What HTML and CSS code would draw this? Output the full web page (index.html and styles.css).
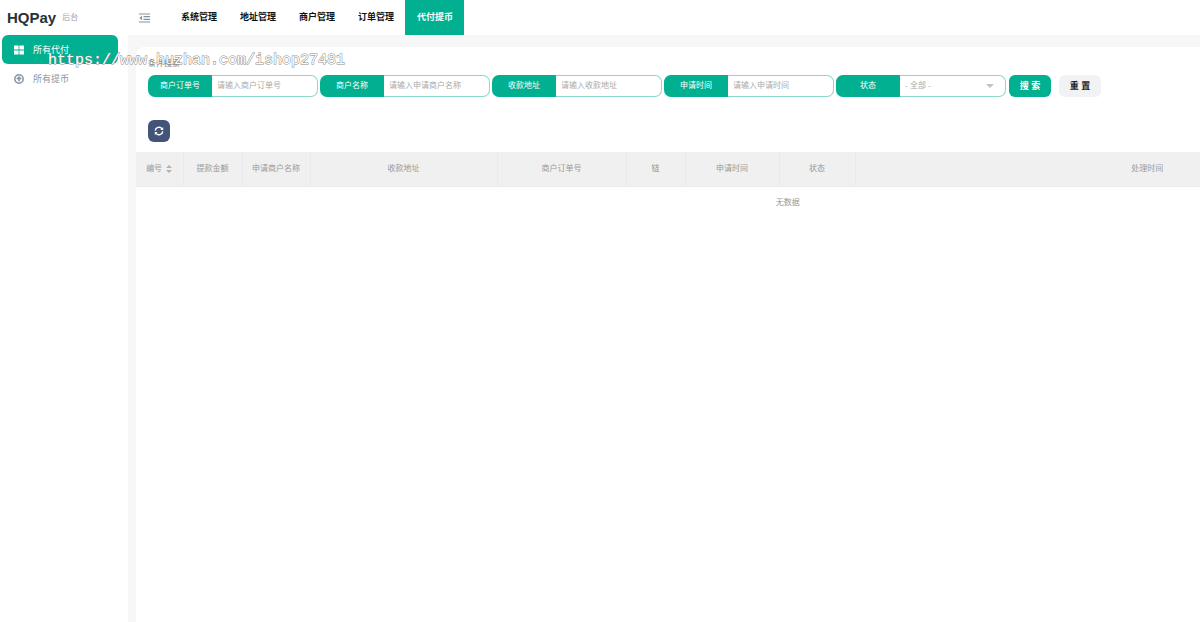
FILE: index.html
```html
<!DOCTYPE html>
<html lang="zh-CN">
<head>
    <meta charset="UTF-8">
    <meta name="viewport" content="width=device-width, initial-scale=1.0">
    <title>HQPay 后台</title>
    <link rel="stylesheet" href="styles.css">
</head>
<body>
    <!-- Top bar -->
    <header class="topbar">
        <a class="logo" href="#">HQPay <small>后台</small></a>
        <button class="menu-toggle" type="button" aria-label="收起菜单">
            <svg width="12" height="10" viewBox="0 0 12 10" fill="none" stroke="currentColor" stroke-width="1.2">
                <path d="M0 1h11M4.5 3.7H11M4.5 6.3H11M0 9h11"/>
                <path d="M3 2.8v4.4L.4 5z" fill="currentColor" stroke="none"/>
            </svg>
        </button>
        <nav class="top-nav">
            <a href="#">系统管理</a>
            <a href="#">地址管理</a>
            <a href="#">商户管理</a>
            <a href="#">订单管理</a>
            <a class="active" href="#">代付提币</a>
        </nav>
    </header>

    <div class="layout">
        <!-- Side menu -->
        <aside class="sidebar">
            <a class="active" href="#">
                <svg width="10" height="10" viewBox="0 0 10 10" fill="currentColor">
                    <path d="M0 .6h4.6v4H0zM5.4.6H10v4H5.4zM0 5.4h4.6v4H0zM5.4 5.4H10v4H5.4z"/>
                </svg>
                所有代付
            </a>
            <a href="#">
                <svg width="10" height="10" viewBox="0 0 10 10" fill="none" stroke="currentColor" stroke-width="1.5">
                    <circle cx="5" cy="5" r="4.2"/>
                    <path d="M5 7.4V3.2M2.8 5.2L5 3l2.2 2.2"/>
                </svg>
                所有提币
            </a>
        </aside>

        <main class="panel">
            <!-- Search form -->
            <form class="search">
                <h2 class="search-title">条件搜索</h2>
                <div class="search-row">
                    <div class="field">
                        <label for="orderNo">商户订单号</label>
                        <input type="text" id="orderNo" placeholder="请输入商户订单号">
                    </div>
                    <div class="field">
                        <label for="merchant">商户名称</label>
                        <input type="text" id="merchant" placeholder="请输入申请商户名称">
                    </div>
                    <div class="field">
                        <label for="address">收款地址</label>
                        <input type="text" id="address" placeholder="请输入收款地址">
                    </div>
                    <div class="field">
                        <label for="applyTime">申请时间</label>
                        <input type="text" id="applyTime" placeholder="请输入申请时间">
                    </div>
                    <div class="field">
                        <label for="status">状态</label>
                        <div class="select-box">
                            <select id="status">
                                <option>- 全部 -</option>
                            </select>
                            <svg width="8" height="4" viewBox="0 0 8 4" fill="#c2c2c2"><path d="M0 0h8L4 4z"/></svg>
                        </div>
                    </div>
                    <div class="actions">
                        <button class="btn btn-primary" type="submit">搜 索</button>
                        <button class="btn" type="reset">重 置</button>
                    </div>
                </div>
            </form>

            <!-- Toolbar -->
            <div class="toolbar">
                <button class="refresh" type="button" aria-label="刷新">
                    <svg width="10" height="10" viewBox="0 0 10 10" fill="none" stroke="currentColor" stroke-width="1.4">
                        <path d="M1.2 4.6A3.8 3.8 0 0 1 8 2.7M8.8 5.4A3.8 3.8 0 0 1 2 7.3"/>
                        <path d="M9.2 1v3H6.2zM.8 9V6h3z" fill="currentColor" stroke="none"/>
                    </svg>
                </button>
            </div>

            <!-- Data table -->
            <div class="table-wrap">
                <table class="data-table">
                    <colgroup>
                        <col class="col-id">
                        <col class="col-short">
                        <col class="col-name">
                        <col class="col-address">
                        <col class="col-order">
                        <col class="col-short">
                        <col class="col-time">
                        <col class="col-status">
                        <col>
                    </colgroup>
                    <thead>
                        <tr>
                            <th>
                                编号
                                <svg class="sort" width="6" height="8" viewBox="0 0 6 8" fill="#b2b2b2"><path d="M0 3L3 0l3 3zM0 5h6L3 8z"/></svg>
                            </th>
                            <th>提款金额</th>
                            <th>申请商户名称</th>
                            <th>收款地址</th>
                            <th>商户订单号</th>
                            <th>链</th>
                            <th>申请时间</th>
                            <th>状态</th>
                            <th>处理时间</th>
                        </tr>
                    </thead>
                    <tbody>
                        <tr>
                            <td colspan="9">无数据</td>
                        </tr>
                    </tbody>
                </table>
            </div>
        </main>
    </div>

    <div class="watermark">https://www.huzhan.com/ishop27481</div>
</body>
</html>
```
FILE: styles.css
```css
/* Global styles */
* {
    box-sizing: border-box;
}

body {
    margin: 0;
    min-height: 100vh;
    display: flex;
    flex-direction: column;
    background-color: #f7f7f7;
    color: #999;
    font-family: "Liberation Sans", "Noto Sans CJK SC", sans-serif;
    font-size: 8px;
    line-height: 12px;
}

a {
    color: inherit;
    text-decoration: none;
}

button,
input,
select {
    font: inherit;
    color: inherit;
    border: none;
    margin: 0;
    padding: 0;
    background: none;
}

button {
    cursor: pointer;
}

svg {
    display: block;
    flex: none;
}

/* Top bar */
.topbar {
    display: flex;
    align-items: center;
    height: 35px;
    background-color: #fff;
}

.logo {
    display: flex;
    align-items: center;
    gap: 6px;
    width: 128px;
    padding-left: 7px;
    color: #263238;
    font-size: 15px;
    font-weight: bold;
}

.logo small {
    color: #99a1ad;
    font-size: 8px;
    font-weight: normal;
}

.menu-toggle {
    padding: 0 11px;
    color: #8392a5;
}

.top-nav {
    display: flex;
    margin-left: 7px;
    color: #111;
    font-size: 9px;
    font-weight: bold;
    line-height: 35px;
}

.top-nav a {
    padding: 0 11px 0 12px;
}

.top-nav .active {
    background-color: #00b090;
    color: #fff;
}

/* Side menu */
.layout {
    display: flex;
    flex: 1;
}

.sidebar {
    flex: none;
    width: 128px;
    padding: 0 10px 0 2px;
    background-color: #fff;
    color: #8795a4;
    font-size: 9px;
}

.sidebar a {
    display: flex;
    align-items: center;
    gap: 9px;
    height: 29px;
    padding-left: 12px;
    border-radius: 6px;
}

.sidebar .active {
    background-color: #00b090;
    color: #fff;
}

/* Content panel */
.panel {
    flex: 1;
    min-width: 0;
    margin: 12px 0 0 8px;
    background-color: #fff;
    border-radius: 8px 0 0 0;
}

.search {
    padding: 11px 12px 0;
}

.search-title {
    margin: 0 0 5px;
    color: #777;
    font-size: 8px;
    font-weight: normal;
}

.search-row {
    display: flex;
    gap: 2px;
}

.field {
    display: flex;
    flex: none;
    width: 170px;
    height: 22px;
}

.field label {
    width: 64px;
    border-radius: 7px 0 0 7px;
    background-color: #00b090;
    color: #fff;
    line-height: 22px;
    text-align: center;
}

.field input,
.select-box {
    flex: 1;
    min-width: 0;
    padding: 0 5px;
    border: 1px solid #8cd9ca;
    border-left: none;
    border-radius: 0 7px 7px 0;
}

.field ::placeholder {
    color: #aaa;
}

.select-box {
    display: flex;
    align-items: center;
    padding-right: 11px;
}

.select-box select {
    flex: 1;
    appearance: none;
    color: #aaa;
}

.actions {
    display: flex;
    gap: 8px;
    margin-left: 1px;
}

.btn {
    width: 42px;
    height: 22px;
    border-radius: 6px;
    background-color: #f1f2f4;
    color: #222;
    font-size: 9px;
    font-weight: bold;
}

.btn-primary {
    background-color: #00b090;
    color: #fff;
}

/* Toolbar */
.toolbar {
    padding: 23px 12px 10px;
}

.refresh {
    display: flex;
    align-items: center;
    justify-content: center;
    width: 22px;
    height: 22px;
    border-radius: 6px;
    background-color: #435478;
    color: #fff;
}

/* Data table, wider than the panel */
.table-wrap {
    overflow-x: auto;
    scrollbar-width: none;
}

.data-table {
    width: 100%;
    min-width: 1304px;
    table-layout: fixed;
    border-collapse: collapse;
    text-align: center;
}

.data-table th {
    height: 34px;
    padding: 0;
    background-color: #f0f0f0;
    border: solid #eaeaea;
    border-width: 0 1px 1px 0;
    font-weight: normal;
}

.data-table td {
    height: 34px;
    padding: 0;
}

.sort {
    display: inline-block;
    margin-left: 2px;
    vertical-align: middle;
}

.col-id {
    width: 47px;
}

.col-short {
    width: 59px;
}

.col-name {
    width: 68px;
}

.col-address {
    width: 187px;
}

.col-order {
    width: 129px;
}

.col-time {
    width: 94px;
}

.col-status {
    width: 76px;
}

/* Watermark over the page */
.watermark {
    position: absolute;
    top: 51px;
    left: 48px;
    color: #fff;
    font-family: "Liberation Mono", monospace;
    font-size: 15px;
    line-height: 20px;
    -webkit-text-stroke: 1px #888;
    paint-order: stroke fill;
    pointer-events: none;
}
```
